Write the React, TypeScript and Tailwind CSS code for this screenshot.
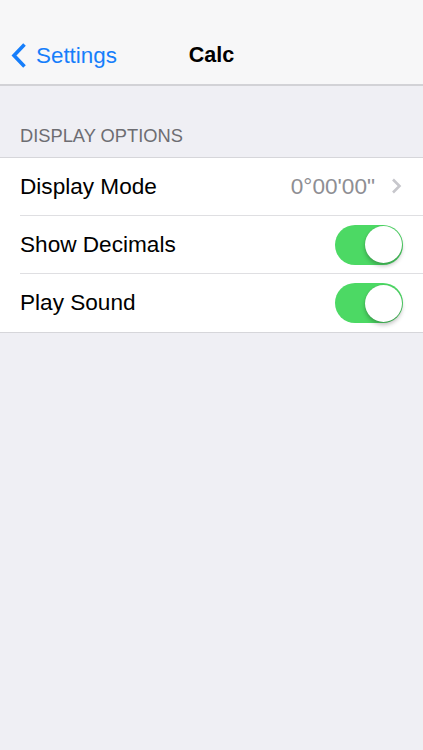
import React from "react";

const Toggle = () => (
  <div className="relative w-[68px] h-[40px] rounded-full bg-[#4cd964]">
    <div className="absolute right-[1.5px] top-[1.5px] w-[37px] h-[37px] rounded-full bg-white shadow-[0_3px_4px_rgba(0,0,0,0.25),0_0_1px_rgba(0,0,0,0.2)]" />
  </div>
);

const App = () => {
  const rows = [
    { label: "Display Mode", value: "0°00'00\"" },
    { label: "Show Decimals", toggle: true },
    { label: "Play Sound", toggle: true },
  ];

  return (
    <div className="min-h-[750px] w-full bg-[#efeff4] font-['Liberation_Sans',Arial,sans-serif]">
      <header className="h-[86px] bg-[#f7f7f8] border-b-2 border-[#d2d2d6] pt-[27px]">
        <div className="relative h-[57px] flex items-center">
          <div className="flex items-center pl-[11px] gap-[9px] text-[#167efb]">
            <svg width="16" height="27" viewBox="0 0 16 27" fill="none">
              <path d="M13.5 2.5 L3 13.5 L13.5 24.5" stroke="#167efb" strokeWidth="3.6" strokeLinecap="butt" strokeLinejoin="miter" />
            </svg>
            <span className="text-[22.4px]">Settings</span>
          </div>
          <div className="absolute inset-0 flex items-center justify-center pointer-events-none">
            <span className="text-[21.5px] font-bold text-black">Calc</span>
          </div>
        </div>
      </header>

      <div className="h-[71px] flex items-end pl-[20px] pb-[8px]">
        <span className="text-[18.3px] text-[#6d6d72] uppercase">Display Options</span>
      </div>

      <div className="bg-white border-y border-[#d6d6da]">
        {rows.map((row, i) => (
          <div key={i} className="pl-[20px]">
            <div
              className={
                "h-[58px] flex items-center justify-between pr-[20px] " +
                (i < rows.length - 1 ? "border-b border-[#dfdfe2]" : "")
              }
            >
              <span className="text-[22.6px] text-black">{row.label}</span>
              {row.toggle ? (
                <Toggle />
              ) : (
                <div className="flex items-center gap-[16px] pr-[1px]">
                  <span className="text-[22.6px] text-[#8e8e93]">{row.value}</span>
                  <svg width="11" height="16" viewBox="0 0 11 16" fill="none">
                    <path d="M2 1.5 L8.5 8 L2 14.5" stroke="#c7c7cc" strokeWidth="2.6" />
                  </svg>
                </div>
              )}
            </div>
          </div>
        ))}
      </div>
    </div>
  );
};

export default App;
